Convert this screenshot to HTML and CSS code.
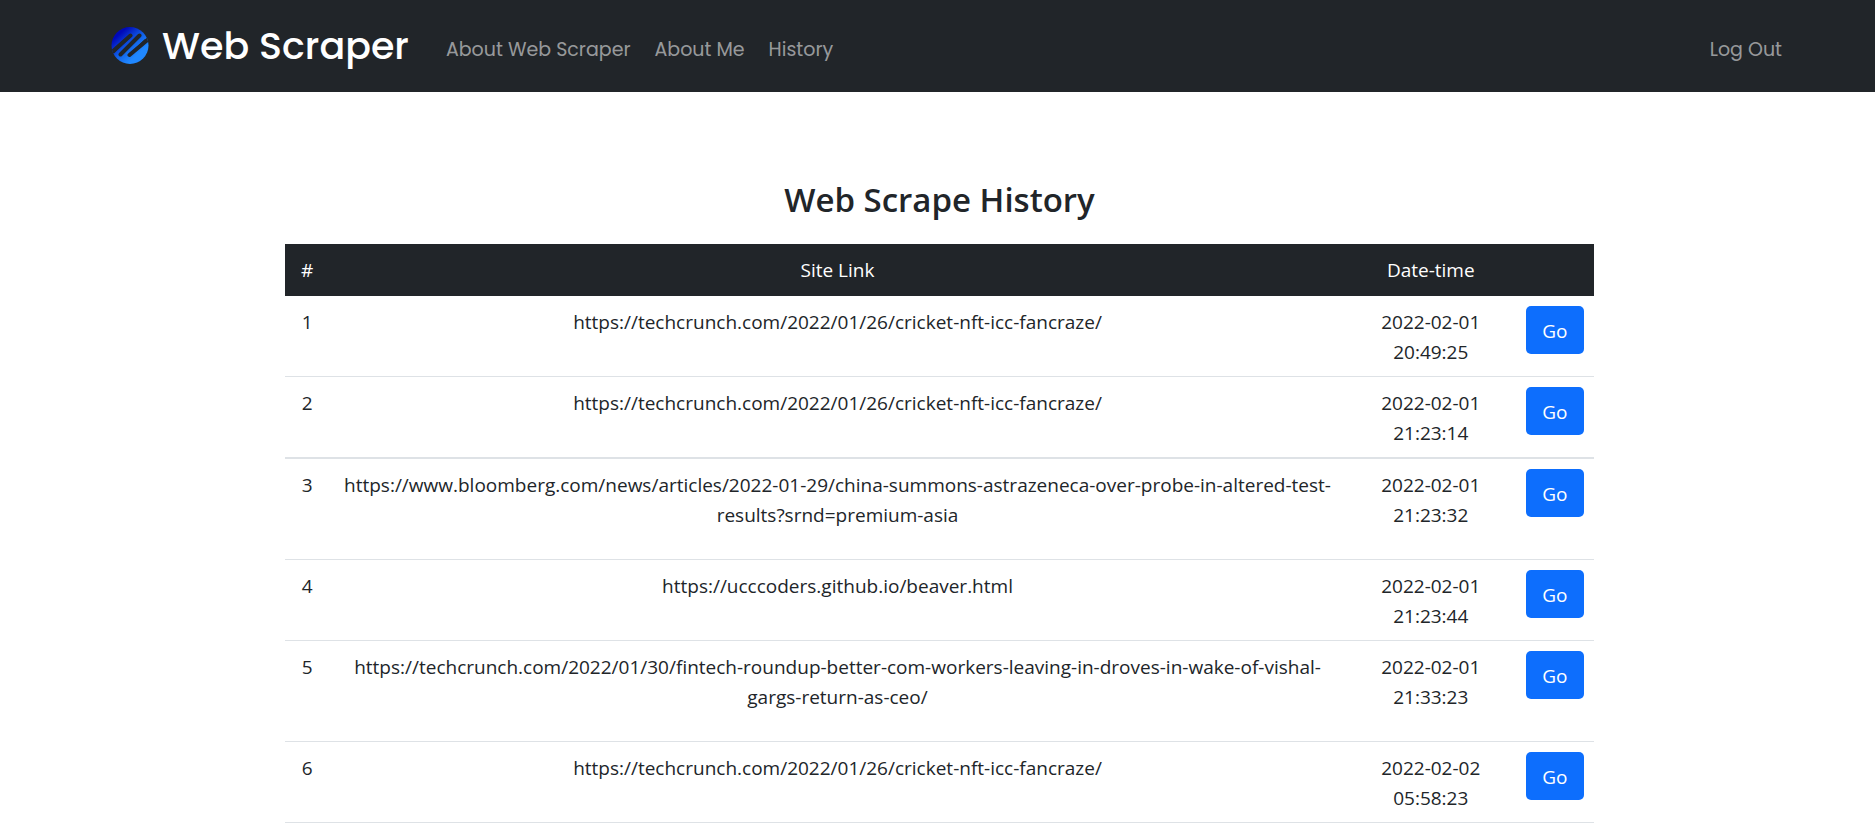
FILE: index.html
```html
<!DOCTYPE html>
<html lang="en">
<head>
<meta charset="utf-8">
<title>Web Scraper</title>
<link rel="stylesheet" href="styles.css">
</head>
<body>
<nav class="navbar">
  <a class="brand" href="#">
    <svg class="brand-logo" viewBox="0 0 38 38" aria-hidden="true">
      <defs>
        <linearGradient id="disc" x1="0.15" y1="0.1" x2="0.85" y2="0.9">
          <stop offset="0.1" stop-color="#0008b8"/>
          <stop offset="0.5" stop-color="#1060e8"/>
          <stop offset="0.8" stop-color="#2088ff"/>
        </linearGradient>
        <clipPath id="round"><circle cx="19" cy="18.500" r="18.500"/></clipPath>
      </defs>
      <circle cx="19" cy="18.500" r="18.500" fill="url(#disc)"/>
      <g clip-path="url(#round)" fill="none" stroke="#212529" stroke-linecap="round">
        <path stroke-width="4" d="M9.500 27.500 L28.500 8.500 M18.500 28 L41 9"/>
        <path stroke-width="4" d="M-3 28.500 L19.500 8.500"/>
        <path stroke-width="1.500" d="M3 25.500 L19 10 M19.500 27 L34 13"/>
      </g>
    </svg>
    <span>Web Scraper</span>
  </a>
  <ul class="nav-links">
    <li><a class="nav-link" href="#">About Web Scraper</a></li>
    <li><a class="nav-link" href="#">About Me</a></li>
    <li><a class="nav-link" href="#">History</a></li>
  </ul>
  <a class="nav-link logout" href="#">Log Out</a>
</nav>
<main class="history">
  <h1 class="title">Web Scrape History</h1>
  <table class="history-table">
    <thead>
      <tr><th class="col-num" scope="col">#</th><th scope="col">Site Link</th><th class="col-date" scope="col">Date-time</th><td class="col-action"></td></tr>
    </thead>
    <tbody>
      <tr><td>1</td><td>https://techcrunch.com/2022/01/26/cricket-nft-icc-fancraze/</td><td>2022-02-01<br>20:49:25</td><td><button class="go" type="button">Go</button></td></tr>
      <tr class="divided"><td>2</td><td>https://techcrunch.com/2022/01/26/cricket-nft-icc-fancraze/</td><td>2022-02-01<br>21:23:14</td><td><button class="go" type="button">Go</button></td></tr>
      <tr class="tall"><td>3</td><td>https://www.bloomberg.com/news/articles/2022-01-29/china-summons-astrazeneca-over-probe-in-altered-test-<br>results?srnd=premium-asia</td><td>2022-02-01<br>21:23:32</td><td><button class="go" type="button">Go</button></td></tr>
      <tr><td>4</td><td>https://ucccoders.github.io/beaver.html</td><td>2022-02-01<br>21:23:44</td><td><button class="go" type="button">Go</button></td></tr>
      <tr class="tall"><td>5</td><td>https://techcrunch.com/2022/01/30/fintech-roundup-better-com-workers-leaving-in-droves-in-wake-of-vishal-<br>gargs-return-as-ceo/</td><td>2022-02-01<br>21:33:23</td><td><button class="go" type="button">Go</button></td></tr>
      <tr><td>6</td><td>https://techcrunch.com/2022/01/26/cricket-nft-icc-fancraze/</td><td>2022-02-02<br>05:58:23</td><td><button class="go" type="button">Go</button></td></tr>
    </tbody>
  </table>
</main>
</body>
</html>
```
FILE: styles.css
```css
* { box-sizing: border-box; }

body {
  margin: 0;
  background: #fff;
  color: #212529;
  font-family: "Segoe UI", "Open Sans", "Noto Sans", sans-serif;
  font-size: 19px;
  line-height: 30px;
}

.navbar {
  display: flex;
  align-items: center;
  min-height: 92px;
  padding: 0 83px 0 111px;
  background: #212529;
  font-family: Poppins, Inter, sans-serif;
}

.brand {
  display: flex;
  align-items: center;
  gap: 13px;
  margin-right: 27px;
  color: #fff;
  font-size: 38px;
  font-weight: 500;
  line-height: 60px;
  text-decoration: none;
  white-space: nowrap;
}

.brand-logo {
  width: 38px;
  height: 38px;
}

.nav-links {
  display: flex;
  gap: 4px;
  margin: 0;
  padding: 0;
  list-style: none;
}

.nav-link {
  display: block;
  padding: 12px 10px 4px;
  color: rgba(255, 255, 255, 0.55);
  text-decoration: none;
  white-space: nowrap;
}

.logout { margin-left: auto; }

.history {
  width: 70%;
  margin: 0 auto;
  padding: 86px 0 0 4px;
}

.title {
  margin: 0 0 22px;
  font-size: 33px;
  font-weight: 600;
  line-height: 44px;
  text-align: center;
}

.history-table {
  width: 100%;
  table-layout: fixed;
  border-collapse: separate;
  border-spacing: 0;
  text-align: center;
}

.history-table th,
.history-table td {
  padding: 11px 10px 9px;
  border-bottom: 1px solid #dee2e6;
  vertical-align: top;
}

.history-table thead th,
.history-table thead td {
  height: 52px;
  border-color: #212529;
  background: #212529;
  color: #fff;
  font-weight: 500;
}

.history-table .col-num { width: 44px; }
.history-table .col-date { width: 170px; }
.history-table .col-action { width: 78px; }

.history-table .divided td { border-bottom-width: 2px; }
.history-table .tall td { height: 101px; }

.history-table td:nth-child(2) {
  padding-right: 0;
  padding-left: 0;
  white-space: nowrap;
}

.history-table td:last-child { padding: 10px; }

.go {
  display: block;
  width: 100%;
  height: 48px;
  padding: 2px 0 0;
  border: 0;
  border-radius: 5px;
  background: #0d6efd;
  color: #fff;
  font: inherit;
}
```
